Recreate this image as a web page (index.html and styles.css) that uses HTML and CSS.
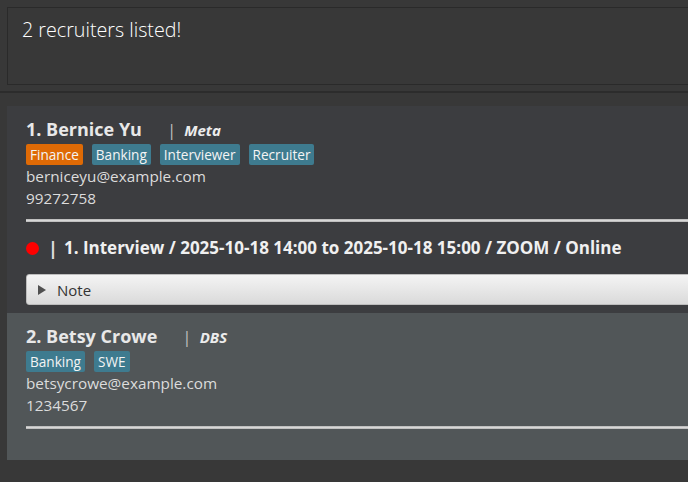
FILE: index.html
```html
<!DOCTYPE html>
<html>
<head>
<meta charset="utf-8">
<link rel="stylesheet" href="styles.css">
</head>
<body>
<div class="result">2 recruiters listed!</div>
<div class="divider"></div>
<div class="list">
  <div class="card card-dark">
    <div class="name-row">
      <span class="name">1. Bernice Yu</span>
      <span class="bar">|</span>
      <span class="company">Meta</span>
    </div>
    <div class="tags">
      <span class="tag tag-orange">Finance</span>
      <span class="tag">Banking</span>
      <span class="tag">Interviewer</span>
      <span class="tag">Recruiter</span>
    </div>
    <div class="info">berniceyu@example.com</div>
    <div class="info">99272758</div>
    <div class="sep"></div>
    <div class="event">
      <span class="dot"></span>
      <span class="event-bar">|</span>
      <span class="event-text">1. Interview / 2025-10-18 14:00 to 2025-10-18 15:00 / ZOOM / Online</span>
    </div>
    <div class="note"><span class="tri"></span><span class="note-label">Note</span></div>
  </div>
  <div class="card card-light">
    <div class="name-row">
      <span class="name">2. Betsy Crowe</span>
      <span class="bar">|</span>
      <span class="company">DBS</span>
    </div>
    <div class="tags">
      <span class="tag">Banking</span>
      <span class="tag">SWE</span>
    </div>
    <div class="info">betsycrowe@example.com</div>
    <div class="info">1234567</div>
    <div class="sep"></div>
    <div class="spacer"></div>
  </div>
</div>
</body>
</html>
```
FILE: styles.css
```css
html, body {
  margin: 0;
  padding: 0;
}
body {
  background: #383838;
  width: 688px;
  height: 482px;
  overflow: hidden;
  font-family: "Open Sans", "Noto Sans", sans-serif;
}
.result {
  margin: 7px 0 0 7px;
  width: 700px;
  height: 67px;
  border: 1px solid #2a2a2a;
  background: #383838;
  color: #ffffff;
  font-weight: 300;
  font-size: 19.7px;
  line-height: 26px;
  padding: 9px 0 0 14px;
}
.divider {
  margin-top: 6px;
  height: 2px;
  background: #2c2c2c;
}
.list {
  margin: 13px 0 0 7px;
  width: 720px;
}
.card {
  display: flex;
  flex-direction: column;
  padding: 10px 0 8px 19px;
}
.card-dark { background: #3c3d40; }
.card-light { background: #515658; }
.name-row {
  display: flex;
  align-items: baseline;
  height: 26px;
  line-height: 26px;
}
.name {
  font-size: 18px;
  font-weight: 700;
  color: #e8e8e8;
}
.bar {
  margin-left: 25px;
  font-size: 17px;
  color: #bdbdbd;
}
.company {
  margin-left: 8px;
  font-size: 15px;
  font-weight: 700;
  font-style: italic;
  color: #ececec;
}
.tags {
  display: flex;
  gap: 9px;
  margin-top: 2px;
}
.tag {
  height: 21px;
  line-height: 21px;
  padding: 0 4px;
  border-radius: 2px;
  background: #3e7b8f;
  color: #f4f4f4;
  font-size: 13.6px;
}
.tag-orange { background: #df6a05; }
.info {
  font-size: 15.3px;
  line-height: 22px;
  color: #dcdcdc;
}
.sep {
  margin-top: 10px;
  height: 3px;
  background: linear-gradient(#a9a9a9, #dedede 40%, #b4b4b4);
}
.event {
  display: flex;
  align-items: center;
  margin-top: 15px;
  height: 22px;
  line-height: 22px;
}
.dot {
  width: 13px;
  height: 13px;
  border-radius: 50%;
  background: #ff0000;
}
.event-bar {
  margin-left: 9px;
  font-size: 18px;
  font-weight: 700;
  color: #e0e0e0;
}
.event-text {
  margin-left: 6px;
  font-size: 17px;
  font-weight: 700;
  color: #f0f0f0;
}
.note {
  margin-top: 15px;
  height: 29px;
  border: 1px solid #bdbdbd;
  border-radius: 3px;
  background: linear-gradient(#f4f4f4, #dadada);
  display: flex;
  align-items: center;
  padding-left: 11px;
}
.tri {
  width: 0;
  height: 0;
  border-top: 5px solid transparent;
  border-bottom: 5px solid transparent;
  border-left: 8px solid #505050;
}
.note-label {
  margin-left: 11px;
  font-size: 15px;
  color: #333333;
}
.spacer { height: 23px; }
```
